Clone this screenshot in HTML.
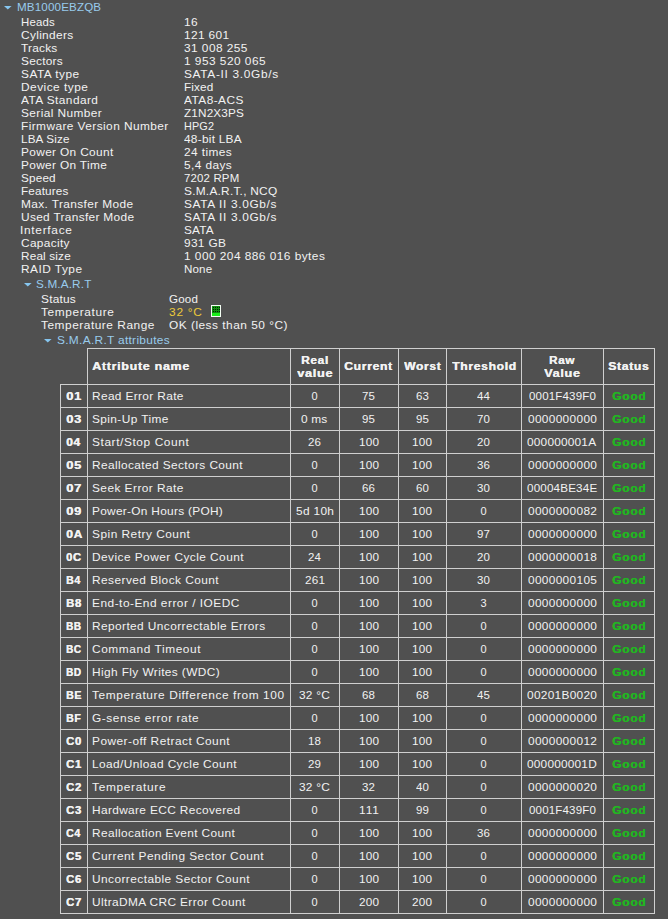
<!DOCTYPE html>
<html><head><meta charset="utf-8"><style>
html,body{margin:0;padding:0;background:#505050;}
body{width:668px;height:919px;position:relative;overflow:hidden;font-family:"Liberation Sans",sans-serif;font-size:11px;line-height:13px;color:#f2f2f2;}
.t{position:absolute;white-space:pre;transform-origin:0 0;}
.b{font-weight:bold;text-shadow:0.35px 0 0 currentColor;}
i{position:absolute;background:#cfcfcf;display:block;}
.tri{position:absolute;}
</style></head><body>
<i style="left:87px;top:348px;width:568px;height:1px"></i><i style="left:87px;top:348px;width:1px;height:566px"></i><i style="left:290px;top:348px;width:1px;height:566px"></i><i style="left:339px;top:348px;width:1px;height:566px"></i><i style="left:398px;top:348px;width:1px;height:566px"></i><i style="left:446px;top:348px;width:1px;height:566px"></i><i style="left:521px;top:348px;width:1px;height:566px"></i><i style="left:603px;top:348px;width:1px;height:566px"></i><i style="left:654px;top:348px;width:1px;height:566px"></i><i style="left:60px;top:384px;width:1px;height:530px"></i><i style="left:60px;top:384px;width:595px;height:1px"></i><i style="left:60px;top:407px;width:595px;height:1px"></i><i style="left:60px;top:430px;width:595px;height:1px"></i><i style="left:60px;top:453px;width:595px;height:1px"></i><i style="left:60px;top:476px;width:595px;height:1px"></i><i style="left:60px;top:499px;width:595px;height:1px"></i><i style="left:60px;top:522px;width:595px;height:1px"></i><i style="left:60px;top:545px;width:595px;height:1px"></i><i style="left:60px;top:568px;width:595px;height:1px"></i><i style="left:60px;top:591px;width:595px;height:1px"></i><i style="left:60px;top:614px;width:595px;height:1px"></i><i style="left:60px;top:637px;width:595px;height:1px"></i><i style="left:60px;top:660px;width:595px;height:1px"></i><i style="left:60px;top:683px;width:595px;height:1px"></i><i style="left:60px;top:706px;width:595px;height:1px"></i><i style="left:60px;top:729px;width:595px;height:1px"></i><i style="left:60px;top:752px;width:595px;height:1px"></i><i style="left:60px;top:775px;width:595px;height:1px"></i><i style="left:60px;top:798px;width:595px;height:1px"></i><i style="left:60px;top:821px;width:595px;height:1px"></i><i style="left:60px;top:844px;width:595px;height:1px"></i><i style="left:60px;top:867px;width:595px;height:1px"></i><i style="left:60px;top:890px;width:595px;height:1px"></i><i style="left:60px;top:913px;width:595px;height:1px"></i>
<svg class="tri" style="left:4px;top:5.6px" width="8" height="4" viewBox="0 0 8 4"><path d="M0 0H7.6L3.8 3.6Z" fill="#86c6f0"/></svg><svg class="tri" style="left:24px;top:282.6px" width="8" height="4" viewBox="0 0 8 4"><path d="M0 0H7.6L3.8 3.6Z" fill="#86c6f0"/></svg><svg class="tri" style="left:44px;top:338.6px" width="8" height="4" viewBox="0 0 8 4"><path d="M0 0H7.6L3.8 3.6Z" fill="#86c6f0"/></svg>
<svg style="position:absolute;left:211px;top:305px" width="10" height="12" viewBox="0 0 10 12" shape-rendering="crispEdges"><rect x="0" y="0" width="10" height="12" fill="#f4fff4"/><rect x="1" y="1" width="8" height="10" fill="#1aee1a"/><rect x="1" y="1" width="8" height="7" fill="#0f8f0f"/><g fill="#002200"><rect x="2" y="2" width="1" height="1"/><rect x="2" y="4" width="1" height="1"/><rect x="2" y="6" width="1" height="1"/><rect x="4" y="2" width="1" height="1"/><rect x="4" y="4" width="1" height="1"/><rect x="4" y="6" width="1" height="1"/><rect x="6" y="2" width="1" height="1"/><rect x="6" y="4" width="1" height="1"/><rect x="6" y="6" width="1" height="1"/><rect x="8" y="2" width="1" height="1"/><rect x="8" y="4" width="1" height="1"/><rect x="8" y="6" width="1" height="1"/></g></svg>
<div class="t " style="left:16.90px;top:0.70px;letter-spacing:0.150px;transform:scaleX(1.0539);color:#98cbec">MB1000EBZQB</div><div class="t " style="left:20.90px;top:15.70px;letter-spacing:0.150px;transform:scaleX(1.0366)">Heads</div><div class="t " style="left:183.60px;top:15.70px;letter-spacing:0.290px;transform:scaleX(1.0800)">16</div><div class="t " style="left:20.90px;top:28.70px;letter-spacing:0.306px;transform:scaleX(1.0800)">Cylinders</div><div class="t " style="left:183.60px;top:28.70px;letter-spacing:0.322px;transform:scaleX(1.0800)">121 601</div><div class="t " style="left:20.90px;top:41.70px;letter-spacing:0.196px;transform:scaleX(1.0800)">Tracks</div><div class="t " style="left:183.60px;top:41.70px;letter-spacing:0.408px;transform:scaleX(1.0800)">31 008 255</div><div class="t " style="left:20.90px;top:54.70px;letter-spacing:0.214px;transform:scaleX(1.0800)">Sectors</div><div class="t " style="left:183.60px;top:54.70px;letter-spacing:0.436px;transform:scaleX(1.0800)">1 953 520 065</div><div class="t " style="left:20.90px;top:67.70px;letter-spacing:0.429px;transform:scaleX(1.0800)">SATA type</div><div class="t " style="left:183.60px;top:67.70px;letter-spacing:0.624px;transform:scaleX(1.0800)">SATA-II 3.0Gb/s</div><div class="t " style="left:20.90px;top:80.70px;letter-spacing:0.441px;transform:scaleX(1.0800)">Device type</div><div class="t " style="left:183.60px;top:80.70px;letter-spacing:0.150px;transform:scaleX(1.0664)">Fixed</div><div class="t " style="left:20.90px;top:93.70px;letter-spacing:0.401px;transform:scaleX(1.0800)">ATA Standard</div><div class="t " style="left:183.60px;top:93.70px;letter-spacing:0.401px;transform:scaleX(1.0800)">ATA8-ACS</div><div class="t " style="left:20.90px;top:106.70px;letter-spacing:0.371px;transform:scaleX(1.0800)">Serial Number</div><div class="t " style="left:183.60px;top:106.70px;letter-spacing:0.150px;transform:scaleX(1.0675)">Z1N2X3PS</div><div class="t " style="left:20.90px;top:119.70px;letter-spacing:0.390px;transform:scaleX(1.0800)">Firmware Version Number</div><div class="t " style="left:183.60px;top:119.70px;letter-spacing:0.150px;transform:scaleX(0.9839)">HPG2</div><div class="t " style="left:20.90px;top:132.70px;letter-spacing:0.150px;transform:scaleX(1.0611)">LBA Size</div><div class="t " style="left:183.60px;top:132.70px;letter-spacing:0.227px;transform:scaleX(1.0800)">48-bit LBA</div><div class="t " style="left:20.90px;top:145.70px;letter-spacing:0.316px;transform:scaleX(1.0800)">Power On Count</div><div class="t " style="left:183.60px;top:145.70px;letter-spacing:0.365px;transform:scaleX(1.0800)">24 times</div><div class="t " style="left:20.90px;top:158.70px;letter-spacing:0.304px;transform:scaleX(1.0800)">Power On Time</div><div class="t " style="left:183.60px;top:158.70px;letter-spacing:0.364px;transform:scaleX(1.0800)">5,4 days</div><div class="t " style="left:20.90px;top:171.70px;letter-spacing:0.150px;transform:scaleX(1.0684)">Speed</div><div class="t " style="left:183.60px;top:171.70px;letter-spacing:0.150px;transform:scaleX(1.0405)">7202 RPM</div><div class="t " style="left:20.90px;top:184.70px;letter-spacing:0.150px;transform:scaleX(1.0654)">Features</div><div class="t " style="left:183.60px;top:184.70px;letter-spacing:0.222px;transform:scaleX(1.0800)">S.M.A.R.T., NCQ</div><div class="t " style="left:20.90px;top:197.70px;letter-spacing:0.347px;transform:scaleX(1.0800)">Max. Transfer Mode</div><div class="t " style="left:183.60px;top:197.70px;letter-spacing:0.595px;transform:scaleX(1.0800)">SATA II 3.0Gb/s</div><div class="t " style="left:20.90px;top:210.70px;letter-spacing:0.293px;transform:scaleX(1.0800)">Used Transfer Mode</div><div class="t " style="left:183.60px;top:210.70px;letter-spacing:0.595px;transform:scaleX(1.0800)">SATA II 3.0Gb/s</div><div class="t " style="left:19.82px;top:223.70px;letter-spacing:0.657px;transform:scaleX(1.0800)">Interface</div><div class="t " style="left:183.60px;top:223.70px;letter-spacing:0.150px;transform:scaleX(1.0741)">SATA</div><div class="t " style="left:20.90px;top:236.70px;letter-spacing:0.296px;transform:scaleX(1.0800)">Capacity</div><div class="t " style="left:183.60px;top:236.70px;letter-spacing:0.292px;transform:scaleX(1.0800)">931 GB</div><div class="t " style="left:20.90px;top:249.70px;letter-spacing:0.150px;transform:scaleX(1.0707)">Real size</div><div class="t " style="left:183.60px;top:249.70px;letter-spacing:0.424px;transform:scaleX(1.0800)">1 000 204 886 016 bytes</div><div class="t " style="left:20.90px;top:262.70px;letter-spacing:0.438px;transform:scaleX(1.0800)">RAID Type</div><div class="t " style="left:183.60px;top:262.70px;letter-spacing:0.150px;transform:scaleX(1.0515)">None</div><div class="t " style="left:36.40px;top:277.70px;letter-spacing:0.150px;transform:scaleX(1.0650);color:#98cbec">S.M.A.R.T</div><div class="t " style="left:40.60px;top:292.70px;letter-spacing:0.200px;transform:scaleX(1.0800)">Status</div><div class="t " style="left:168.80px;top:292.70px;letter-spacing:0.150px;transform:scaleX(1.0535)">Good</div><div class="t " style="left:40.60px;top:305.70px;letter-spacing:0.577px;transform:scaleX(1.0800)">Temperature</div><div class="t " style="left:168.80px;top:305.70px;letter-spacing:0.716px;transform:scaleX(1.0800);color:#ecca3a">32 °C</div><div class="t " style="left:40.60px;top:318.70px;letter-spacing:0.488px;transform:scaleX(1.0800)">Temperature Range</div><div class="t " style="left:168.80px;top:318.70px;letter-spacing:0.455px;transform:scaleX(1.0800)">OK (less than 50 °C)</div><div class="t " style="left:56.50px;top:333.70px;letter-spacing:0.288px;transform:scaleX(1.0800);color:#98cbec">S.M.A.R.T attributes</div><div class="t b" style="left:92.40px;top:359.70px;letter-spacing:0.600px;transform:scaleX(1.1372)">Attribute name</div><div class="t b" style="left:301.00px;top:353.70px;letter-spacing:0.600px;transform:scaleX(1.0809)">Real</div><div class="t b" style="left:296.85px;top:366.70px;letter-spacing:0.600px;transform:scaleX(1.1608)">value</div><div class="t b" style="left:549.10px;top:353.70px;letter-spacing:0.600px;transform:scaleX(1.0634)">Raw</div><div class="t b" style="left:544.15px;top:366.70px;letter-spacing:0.600px;transform:scaleX(1.1508)">Value</div><div class="t b" style="left:344.30px;top:359.70px;letter-spacing:0.600px;transform:scaleX(1.1085)">Current</div><div class="t b" style="left:403.55px;top:359.70px;letter-spacing:0.600px;transform:scaleX(1.0949)">Worst</div><div class="t b" style="left:451.90px;top:359.70px;letter-spacing:0.600px;transform:scaleX(1.1039)">Threshold</div><div class="t b" style="left:608.25px;top:359.70px;letter-spacing:0.600px;transform:scaleX(1.1096)">Status</div><div class="t b" style="left:65.70px;top:389.70px;letter-spacing:0.600px;transform:scaleX(1.1795)">01</div><div class="t " style="left:92.40px;top:389.70px;letter-spacing:0.326px;transform:scaleX(1.0800)">Read Error Rate</div><div class="t " style="left:311.50px;top:389.70px;letter-spacing:0.000px">0</div><div class="t " style="left:362.10px;top:389.70px;letter-spacing:0.150px;transform:scaleX(1.0434)">75</div><div class="t " style="left:415.60px;top:389.70px;letter-spacing:0.150px;transform:scaleX(1.0434)">63</div><div class="t " style="left:477.10px;top:389.70px;letter-spacing:0.150px;transform:scaleX(1.0434)">44</div><div class="t " style="left:528.60px;top:389.70px;letter-spacing:0.150px;transform:scaleX(1.0501)">0001F439F0</div><div class="t b" style="left:612.10px;top:389.70px;letter-spacing:0.600px;transform:scaleX(1.1009);color:#22b522">Good</div><div class="t b" style="left:65.70px;top:412.70px;letter-spacing:0.600px;transform:scaleX(1.1795)">03</div><div class="t " style="left:92.40px;top:412.70px;letter-spacing:0.366px;transform:scaleX(1.0800)">Spin-Up Time</div><div class="t " style="left:301.10px;top:412.70px;letter-spacing:0.159px;transform:scaleX(1.0800)">0 ms</div><div class="t " style="left:362.10px;top:412.70px;letter-spacing:0.150px;transform:scaleX(1.0434)">95</div><div class="t " style="left:415.60px;top:412.70px;letter-spacing:0.150px;transform:scaleX(1.0434)">95</div><div class="t " style="left:477.10px;top:412.70px;letter-spacing:0.150px;transform:scaleX(1.0434)">70</div><div class="t " style="left:527.60px;top:412.70px;letter-spacing:0.294px;transform:scaleX(1.0800)">0000000000</div><div class="t b" style="left:612.10px;top:412.70px;letter-spacing:0.600px;transform:scaleX(1.1009);color:#22b522">Good</div><div class="t b" style="left:65.70px;top:435.70px;letter-spacing:0.600px;transform:scaleX(1.0935)">04</div><div class="t " style="left:92.40px;top:435.70px;letter-spacing:0.551px;transform:scaleX(1.0800)">Start/Stop Count</div><div class="t " style="left:308.10px;top:435.70px;letter-spacing:0.150px;transform:scaleX(1.0434)">26</div><div class="t " style="left:358.60px;top:435.70px;letter-spacing:0.150px;transform:scaleX(1.0682)">100</div><div class="t " style="left:412.10px;top:435.70px;letter-spacing:0.150px;transform:scaleX(1.0682)">100</div><div class="t " style="left:477.10px;top:435.70px;letter-spacing:0.150px;transform:scaleX(1.0434)">20</div><div class="t " style="left:527.10px;top:435.70px;letter-spacing:0.175px;transform:scaleX(1.0800)">000000001A</div><div class="t b" style="left:612.10px;top:435.70px;letter-spacing:0.600px;transform:scaleX(1.1009);color:#22b522">Good</div><div class="t b" style="left:65.70px;top:458.70px;letter-spacing:0.600px;transform:scaleX(1.1795)">05</div><div class="t " style="left:92.40px;top:458.70px;letter-spacing:0.360px;transform:scaleX(1.0800)">Reallocated Sectors Count</div><div class="t " style="left:311.50px;top:458.70px;letter-spacing:0.000px">0</div><div class="t " style="left:358.60px;top:458.70px;letter-spacing:0.150px;transform:scaleX(1.0682)">100</div><div class="t " style="left:412.10px;top:458.70px;letter-spacing:0.150px;transform:scaleX(1.0682)">100</div><div class="t " style="left:477.10px;top:458.70px;letter-spacing:0.150px;transform:scaleX(1.0434)">36</div><div class="t " style="left:527.60px;top:458.70px;letter-spacing:0.294px;transform:scaleX(1.0800)">0000000000</div><div class="t b" style="left:612.10px;top:458.70px;letter-spacing:0.600px;transform:scaleX(1.1009);color:#22b522">Good</div><div class="t b" style="left:65.70px;top:481.70px;letter-spacing:0.600px;transform:scaleX(1.1795)">07</div><div class="t " style="left:92.40px;top:481.70px;letter-spacing:0.414px;transform:scaleX(1.0800)">Seek Error Rate</div><div class="t " style="left:311.50px;top:481.70px;letter-spacing:0.000px">0</div><div class="t " style="left:362.10px;top:481.70px;letter-spacing:0.150px;transform:scaleX(1.0434)">66</div><div class="t " style="left:415.60px;top:481.70px;letter-spacing:0.150px;transform:scaleX(1.0434)">60</div><div class="t " style="left:477.10px;top:481.70px;letter-spacing:0.150px;transform:scaleX(1.0434)">30</div><div class="t " style="left:527.10px;top:481.70px;letter-spacing:0.150px;transform:scaleX(1.0600)">00004BE34E</div><div class="t b" style="left:612.10px;top:481.70px;letter-spacing:0.600px;transform:scaleX(1.1009);color:#22b522">Good</div><div class="t b" style="left:65.70px;top:504.70px;letter-spacing:0.600px;transform:scaleX(1.1795)">09</div><div class="t " style="left:92.40px;top:504.70px;letter-spacing:0.263px;transform:scaleX(1.0800)">Power-On Hours (POH)</div><div class="t " style="left:295.60px;top:504.70px;letter-spacing:0.295px;transform:scaleX(1.0800)">5d 10h</div><div class="t " style="left:358.60px;top:504.70px;letter-spacing:0.150px;transform:scaleX(1.0682)">100</div><div class="t " style="left:412.10px;top:504.70px;letter-spacing:0.150px;transform:scaleX(1.0682)">100</div><div class="t " style="left:480.50px;top:504.70px;letter-spacing:0.000px">0</div><div class="t " style="left:527.60px;top:504.70px;letter-spacing:0.294px;transform:scaleX(1.0800)">0000000082</div><div class="t b" style="left:612.10px;top:504.70px;letter-spacing:0.600px;transform:scaleX(1.1009);color:#22b522">Good</div><div class="t b" style="left:65.70px;top:527.70px;letter-spacing:0.600px;transform:scaleX(1.1007)">0A</div><div class="t " style="left:92.40px;top:527.70px;letter-spacing:0.457px;transform:scaleX(1.0800)">Spin Retry Count</div><div class="t " style="left:311.50px;top:527.70px;letter-spacing:0.000px">0</div><div class="t " style="left:358.60px;top:527.70px;letter-spacing:0.150px;transform:scaleX(1.0682)">100</div><div class="t " style="left:412.10px;top:527.70px;letter-spacing:0.150px;transform:scaleX(1.0682)">100</div><div class="t " style="left:477.10px;top:527.70px;letter-spacing:0.150px;transform:scaleX(1.0434)">97</div><div class="t " style="left:527.60px;top:527.70px;letter-spacing:0.294px;transform:scaleX(1.0800)">0000000000</div><div class="t b" style="left:612.10px;top:527.70px;letter-spacing:0.600px;transform:scaleX(1.1009);color:#22b522">Good</div><div class="t b" style="left:65.70px;top:550.70px;letter-spacing:0.600px;transform:scaleX(1.0192)">0C</div><div class="t " style="left:92.40px;top:550.70px;letter-spacing:0.413px;transform:scaleX(1.0800)">Device Power Cycle Count</div><div class="t " style="left:308.10px;top:550.70px;letter-spacing:0.150px;transform:scaleX(1.0434)">24</div><div class="t " style="left:358.60px;top:550.70px;letter-spacing:0.150px;transform:scaleX(1.0682)">100</div><div class="t " style="left:412.10px;top:550.70px;letter-spacing:0.150px;transform:scaleX(1.0682)">100</div><div class="t " style="left:477.10px;top:550.70px;letter-spacing:0.150px;transform:scaleX(1.0434)">20</div><div class="t " style="left:527.60px;top:550.70px;letter-spacing:0.294px;transform:scaleX(1.0800)">0000000018</div><div class="t b" style="left:612.10px;top:550.70px;letter-spacing:0.600px;transform:scaleX(1.1009);color:#22b522">Good</div><div class="t b" style="left:65.70px;top:573.70px;letter-spacing:0.600px;transform:scaleX(0.9650)">B4</div><div class="t " style="left:92.40px;top:573.70px;letter-spacing:0.412px;transform:scaleX(1.0800)">Reserved Block Count</div><div class="t " style="left:304.60px;top:573.70px;letter-spacing:0.150px;transform:scaleX(1.0682)">261</div><div class="t " style="left:358.60px;top:573.70px;letter-spacing:0.150px;transform:scaleX(1.0682)">100</div><div class="t " style="left:412.10px;top:573.70px;letter-spacing:0.150px;transform:scaleX(1.0682)">100</div><div class="t " style="left:477.10px;top:573.70px;letter-spacing:0.150px;transform:scaleX(1.0434)">30</div><div class="t " style="left:527.60px;top:573.70px;letter-spacing:0.294px;transform:scaleX(1.0800)">0000000105</div><div class="t b" style="left:612.10px;top:573.70px;letter-spacing:0.600px;transform:scaleX(1.1009);color:#22b522">Good</div><div class="t b" style="left:65.70px;top:596.70px;letter-spacing:0.600px;transform:scaleX(1.0314)">B8</div><div class="t " style="left:92.40px;top:596.70px;letter-spacing:0.460px;transform:scaleX(1.0800)">End-to-End error / IOEDC</div><div class="t " style="left:311.50px;top:596.70px;letter-spacing:0.000px">0</div><div class="t " style="left:358.60px;top:596.70px;letter-spacing:0.150px;transform:scaleX(1.0682)">100</div><div class="t " style="left:412.10px;top:596.70px;letter-spacing:0.150px;transform:scaleX(1.0682)">100</div><div class="t " style="left:480.50px;top:596.70px;letter-spacing:0.000px">3</div><div class="t " style="left:527.60px;top:596.70px;letter-spacing:0.294px;transform:scaleX(1.0800)">0000000000</div><div class="t b" style="left:612.10px;top:596.70px;letter-spacing:0.600px;transform:scaleX(1.1009);color:#22b522">Good</div><div class="t b" style="left:65.70px;top:619.70px;letter-spacing:0.600px;transform:scaleX(0.9067)">BB</div><div class="t " style="left:92.40px;top:619.70px;letter-spacing:0.377px;transform:scaleX(1.0800)">Reported Uncorrectable Errors</div><div class="t " style="left:311.50px;top:619.70px;letter-spacing:0.000px">0</div><div class="t " style="left:358.60px;top:619.70px;letter-spacing:0.150px;transform:scaleX(1.0682)">100</div><div class="t " style="left:412.10px;top:619.70px;letter-spacing:0.150px;transform:scaleX(1.0682)">100</div><div class="t " style="left:480.50px;top:619.70px;letter-spacing:0.000px">0</div><div class="t " style="left:527.60px;top:619.70px;letter-spacing:0.294px;transform:scaleX(1.0800)">0000000000</div><div class="t b" style="left:612.10px;top:619.70px;letter-spacing:0.600px;transform:scaleX(1.1009);color:#22b522">Good</div><div class="t b" style="left:65.70px;top:642.70px;letter-spacing:0.600px;transform:scaleX(0.9067)">BC</div><div class="t " style="left:92.40px;top:642.70px;letter-spacing:0.541px;transform:scaleX(1.0800)">Command Timeout</div><div class="t " style="left:311.50px;top:642.70px;letter-spacing:0.000px">0</div><div class="t " style="left:358.60px;top:642.70px;letter-spacing:0.150px;transform:scaleX(1.0682)">100</div><div class="t " style="left:412.10px;top:642.70px;letter-spacing:0.150px;transform:scaleX(1.0682)">100</div><div class="t " style="left:480.50px;top:642.70px;letter-spacing:0.000px">0</div><div class="t " style="left:527.60px;top:642.70px;letter-spacing:0.294px;transform:scaleX(1.0800)">0000000000</div><div class="t b" style="left:612.10px;top:642.70px;letter-spacing:0.600px;transform:scaleX(1.1009);color:#22b522">Good</div><div class="t b" style="left:65.70px;top:665.70px;letter-spacing:0.600px;transform:scaleX(0.9067)">BD</div><div class="t " style="left:92.40px;top:665.70px;letter-spacing:0.362px;transform:scaleX(1.0800)">High Fly Writes (WDC)</div><div class="t " style="left:311.50px;top:665.70px;letter-spacing:0.000px">0</div><div class="t " style="left:358.60px;top:665.70px;letter-spacing:0.150px;transform:scaleX(1.0682)">100</div><div class="t " style="left:412.10px;top:665.70px;letter-spacing:0.150px;transform:scaleX(1.0682)">100</div><div class="t " style="left:480.50px;top:665.70px;letter-spacing:0.000px">0</div><div class="t " style="left:527.60px;top:665.70px;letter-spacing:0.294px;transform:scaleX(1.0800)">0000000000</div><div class="t b" style="left:612.10px;top:665.70px;letter-spacing:0.600px;transform:scaleX(1.1009);color:#22b522">Good</div><div class="t b" style="left:65.70px;top:688.70px;letter-spacing:0.600px;transform:scaleX(0.9650)">BE</div><div class="t " style="left:92.40px;top:688.70px;letter-spacing:0.556px;transform:scaleX(1.0800)">Temperature Difference from 100</div><div class="t " style="left:299.10px;top:688.70px;letter-spacing:0.207px;transform:scaleX(1.0800)">32 °C</div><div class="t " style="left:362.10px;top:688.70px;letter-spacing:0.150px;transform:scaleX(1.0434)">68</div><div class="t " style="left:415.60px;top:688.70px;letter-spacing:0.150px;transform:scaleX(1.0434)">68</div><div class="t " style="left:477.10px;top:688.70px;letter-spacing:0.150px;transform:scaleX(1.0434)">45</div><div class="t " style="left:527.10px;top:688.70px;letter-spacing:0.261px;transform:scaleX(1.0800)">00201B0020</div><div class="t b" style="left:612.10px;top:688.70px;letter-spacing:0.600px;transform:scaleX(1.1009);color:#22b522">Good</div><div class="t b" style="left:65.70px;top:711.70px;letter-spacing:0.600px;transform:scaleX(0.9650)">BF</div><div class="t " style="left:92.40px;top:711.70px;letter-spacing:0.527px;transform:scaleX(1.0800)">G-sense error rate</div><div class="t " style="left:311.50px;top:711.70px;letter-spacing:0.000px">0</div><div class="t " style="left:358.60px;top:711.70px;letter-spacing:0.150px;transform:scaleX(1.0682)">100</div><div class="t " style="left:412.10px;top:711.70px;letter-spacing:0.150px;transform:scaleX(1.0682)">100</div><div class="t " style="left:480.50px;top:711.70px;letter-spacing:0.000px">0</div><div class="t " style="left:527.60px;top:711.70px;letter-spacing:0.294px;transform:scaleX(1.0800)">0000000000</div><div class="t b" style="left:612.10px;top:711.70px;letter-spacing:0.600px;transform:scaleX(1.1009);color:#22b522">Good</div><div class="t b" style="left:65.70px;top:734.70px;letter-spacing:0.600px;transform:scaleX(1.0314)">C0</div><div class="t " style="left:92.40px;top:734.70px;letter-spacing:0.435px;transform:scaleX(1.0800)">Power-off Retract Count</div><div class="t " style="left:308.10px;top:734.70px;letter-spacing:0.150px;transform:scaleX(1.0434)">18</div><div class="t " style="left:358.60px;top:734.70px;letter-spacing:0.150px;transform:scaleX(1.0682)">100</div><div class="t " style="left:412.10px;top:734.70px;letter-spacing:0.150px;transform:scaleX(1.0682)">100</div><div class="t " style="left:480.50px;top:734.70px;letter-spacing:0.000px">0</div><div class="t " style="left:527.60px;top:734.70px;letter-spacing:0.294px;transform:scaleX(1.0800)">0000000012</div><div class="t b" style="left:612.10px;top:734.70px;letter-spacing:0.600px;transform:scaleX(1.1009);color:#22b522">Good</div><div class="t b" style="left:65.70px;top:757.70px;letter-spacing:0.600px;transform:scaleX(1.0314)">C1</div><div class="t " style="left:92.40px;top:757.70px;letter-spacing:0.382px;transform:scaleX(1.0800)">Load/Unload Cycle Count</div><div class="t " style="left:308.10px;top:757.70px;letter-spacing:0.150px;transform:scaleX(1.0434)">29</div><div class="t " style="left:358.60px;top:757.70px;letter-spacing:0.150px;transform:scaleX(1.0682)">100</div><div class="t " style="left:412.10px;top:757.70px;letter-spacing:0.150px;transform:scaleX(1.0682)">100</div><div class="t " style="left:480.50px;top:757.70px;letter-spacing:0.000px">0</div><div class="t " style="left:527.10px;top:757.70px;letter-spacing:0.175px;transform:scaleX(1.0800)">000000001D</div><div class="t b" style="left:612.10px;top:757.70px;letter-spacing:0.600px;transform:scaleX(1.1009);color:#22b522">Good</div><div class="t b" style="left:65.70px;top:780.70px;letter-spacing:0.600px;transform:scaleX(1.0314)">C2</div><div class="t " style="left:92.40px;top:780.70px;letter-spacing:0.642px;transform:scaleX(1.0800)">Temperature</div><div class="t " style="left:299.10px;top:780.70px;letter-spacing:0.207px;transform:scaleX(1.0800)">32 °C</div><div class="t " style="left:362.10px;top:780.70px;letter-spacing:0.150px;transform:scaleX(1.0434)">32</div><div class="t " style="left:415.60px;top:780.70px;letter-spacing:0.150px;transform:scaleX(1.0434)">40</div><div class="t " style="left:480.50px;top:780.70px;letter-spacing:0.000px">0</div><div class="t " style="left:527.60px;top:780.70px;letter-spacing:0.294px;transform:scaleX(1.0800)">0000000020</div><div class="t b" style="left:612.10px;top:780.70px;letter-spacing:0.600px;transform:scaleX(1.1009);color:#22b522">Good</div><div class="t b" style="left:65.70px;top:803.70px;letter-spacing:0.600px;transform:scaleX(1.0314)">C3</div><div class="t " style="left:92.40px;top:803.70px;letter-spacing:0.326px;transform:scaleX(1.0800)">Hardware ECC Recovered</div><div class="t " style="left:311.50px;top:803.70px;letter-spacing:0.000px">0</div><div class="t " style="left:358.60px;top:803.70px;letter-spacing:0.865px;transform:scaleX(1.0800)">111</div><div class="t " style="left:415.60px;top:803.70px;letter-spacing:0.150px;transform:scaleX(1.0434)">99</div><div class="t " style="left:480.50px;top:803.70px;letter-spacing:0.000px">0</div><div class="t " style="left:528.60px;top:803.70px;letter-spacing:0.150px;transform:scaleX(1.0501)">0001F439F0</div><div class="t b" style="left:612.10px;top:803.70px;letter-spacing:0.600px;transform:scaleX(1.1009);color:#22b522">Good</div><div class="t b" style="left:65.70px;top:826.70px;letter-spacing:0.600px;transform:scaleX(0.9650)">C4</div><div class="t " style="left:92.40px;top:826.70px;letter-spacing:0.350px;transform:scaleX(1.0800)">Reallocation Event Count</div><div class="t " style="left:311.50px;top:826.70px;letter-spacing:0.000px">0</div><div class="t " style="left:358.60px;top:826.70px;letter-spacing:0.150px;transform:scaleX(1.0682)">100</div><div class="t " style="left:412.10px;top:826.70px;letter-spacing:0.150px;transform:scaleX(1.0682)">100</div><div class="t " style="left:477.10px;top:826.70px;letter-spacing:0.150px;transform:scaleX(1.0434)">36</div><div class="t " style="left:527.60px;top:826.70px;letter-spacing:0.294px;transform:scaleX(1.0800)">0000000000</div><div class="t b" style="left:612.10px;top:826.70px;letter-spacing:0.600px;transform:scaleX(1.1009);color:#22b522">Good</div><div class="t b" style="left:65.70px;top:849.70px;letter-spacing:0.600px;transform:scaleX(1.0314)">C5</div><div class="t " style="left:92.40px;top:849.70px;letter-spacing:0.429px;transform:scaleX(1.0800)">Current Pending Sector Count</div><div class="t " style="left:311.50px;top:849.70px;letter-spacing:0.000px">0</div><div class="t " style="left:358.60px;top:849.70px;letter-spacing:0.150px;transform:scaleX(1.0682)">100</div><div class="t " style="left:412.10px;top:849.70px;letter-spacing:0.150px;transform:scaleX(1.0682)">100</div><div class="t " style="left:480.50px;top:849.70px;letter-spacing:0.000px">0</div><div class="t " style="left:527.60px;top:849.70px;letter-spacing:0.294px;transform:scaleX(1.0800)">0000000000</div><div class="t b" style="left:612.10px;top:849.70px;letter-spacing:0.600px;transform:scaleX(1.1009);color:#22b522">Good</div><div class="t b" style="left:65.70px;top:872.70px;letter-spacing:0.600px;transform:scaleX(1.0314)">C6</div><div class="t " style="left:92.40px;top:872.70px;letter-spacing:0.403px;transform:scaleX(1.0800)">Uncorrectable Sector Count</div><div class="t " style="left:311.50px;top:872.70px;letter-spacing:0.000px">0</div><div class="t " style="left:358.60px;top:872.70px;letter-spacing:0.150px;transform:scaleX(1.0682)">100</div><div class="t " style="left:412.10px;top:872.70px;letter-spacing:0.150px;transform:scaleX(1.0682)">100</div><div class="t " style="left:480.50px;top:872.70px;letter-spacing:0.000px">0</div><div class="t " style="left:527.60px;top:872.70px;letter-spacing:0.294px;transform:scaleX(1.0800)">0000000000</div><div class="t b" style="left:612.10px;top:872.70px;letter-spacing:0.600px;transform:scaleX(1.1009);color:#22b522">Good</div><div class="t b" style="left:65.70px;top:895.70px;letter-spacing:0.600px;transform:scaleX(1.0314)">C7</div><div class="t " style="left:92.40px;top:895.70px;letter-spacing:0.348px;transform:scaleX(1.0800)">UltraDMA CRC Error Count</div><div class="t " style="left:311.50px;top:895.70px;letter-spacing:0.000px">0</div><div class="t " style="left:358.60px;top:895.70px;letter-spacing:0.150px;transform:scaleX(1.0682)">200</div><div class="t " style="left:412.10px;top:895.70px;letter-spacing:0.150px;transform:scaleX(1.0682)">200</div><div class="t " style="left:480.50px;top:895.70px;letter-spacing:0.000px">0</div><div class="t " style="left:527.60px;top:895.70px;letter-spacing:0.294px;transform:scaleX(1.0800)">0000000000</div><div class="t b" style="left:612.10px;top:895.70px;letter-spacing:0.600px;transform:scaleX(1.1009);color:#22b522">Good</div>
</body></html>
